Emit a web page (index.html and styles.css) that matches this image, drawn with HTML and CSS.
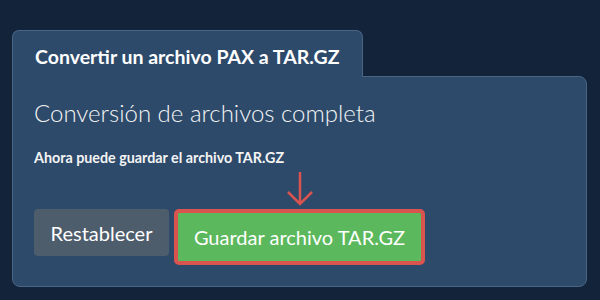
FILE: index.html
```html
<!DOCTYPE html>
<html lang="es">
<head>
  <meta charset="UTF-8">
  <meta name="viewport" content="width=device-width, initial-scale=1.0">
  <title>Convertir PAX a TAR.GZ</title>
  <link rel="stylesheet" href="styles.css">
</head>
<body>

  <div class="converter">
    <div class="tab">Convertir un archivo PAX a TAR.GZ</div>

    <div class="panel">
      <h2>Conversión de archivos completa</h2>
      <p class="hint">Ahora puede guardar el archivo TAR.GZ</p>

      <div class="actions">
        <button class="btn reset-btn">Restablecer</button>
        <div class="save-wrap">
          <!-- Flecha que apunta al botón de guardar -->
          <svg class="arrow" width="30" height="36" viewBox="0 0 30 36">
            <path d="M15 1 V33 M3 21 L15 33 L27 21" fill="none" stroke="#d9534f" stroke-width="2.5"/>
          </svg>
          <button class="btn save-btn">Guardar archivo TAR.GZ</button>
        </div>
      </div>
    </div>
  </div>

</body>
</html>
```

FILE: styles.css
```css
body {
  font-family: Lato, "Open Sans", sans-serif;
  background-color: #12233a;
  margin: 0;
  padding: 30px 13px 13px 12px;
  color: #ffffff;
}

.converter {
  display: flex;
  flex-direction: column;
  align-items: flex-start;
}

.tab {
  background-color: #2d4a6b;
  border: 1px solid #4a6687;
  border-bottom: none;
  border-radius: 7px 7px 0 0;
  height: 47px;
  padding: 0 22px;
  box-sizing: border-box;
  width: 351px;
  line-height: 52px;
  font-size: 19.5px;
  font-weight: 700;
  margin-bottom: -1px;
  position: relative;
  z-index: 1;
}

.panel {
  align-self: stretch;
  background-color: #2d4a6b;
  border: 1px solid #4a6687;
  border-radius: 0 8px 8px 8px;
  padding: 22px 21px 20px;
  height: 211px;
  box-sizing: border-box;
}

h2 {
  margin: 0;
  font-size: 24px;
  font-weight: 300;
  line-height: 28px;
  color: #f4f4f4;
}

.hint {
  margin: 22px 0 0;
  font-size: 14.3px;
  font-weight: 700;
  line-height: 18px;
  color: #f4f4f4;
}

.actions {
  display: flex;
  align-items: flex-end;
  gap: 5px;
  margin-top: 4px;
}

.btn {
  font-family: Lato, "Open Sans", sans-serif;
  font-size: 20px;
  font-weight: 400;
  color: #ffffff;
  border: none;
  border-radius: 4px;
  cursor: pointer;
}

.reset-btn {
  background-color: #4e5d6c;
  height: 47px;
  width: 135px;
  margin-bottom: 9px;
}

.save-wrap {
  display: flex;
  flex-direction: column;
  align-items: center;
}

.arrow {
  display: block;
  margin-bottom: 2px;
}

.save-btn {
  background-color: #5cb85c;
  border: 4px solid #d9534f;
  border-radius: 5px;
  height: 56px;
  width: 251px;
}
```
